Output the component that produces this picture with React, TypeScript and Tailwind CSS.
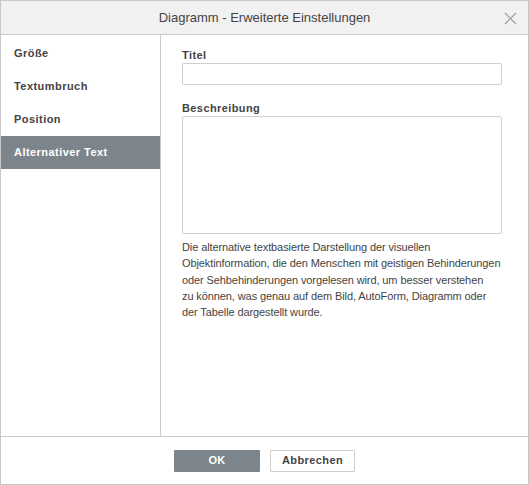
const NAV = ["Größe", "Textumbruch", "Position", "Alternativer Text"];

const DESC = [
  "Die alternative textbasierte Darstellung der visuellen",
  "Objektinformation, die den Menschen mit geistigen Behinderungen",
  "oder Sehbehinderungen vorgelesen wird, um besser verstehen",
  "zu können, was genau auf dem Bild, AutoForm, Diagramm oder",
  "der Tabelle dargestellt wurde.",
];

export default function App() {
  const active = "Alternativer Text";
  return (
    <div className="flex h-[485px] w-[529px] flex-col border border-[#c8c8c8] bg-white font-['Liberation_Sans',Arial,sans-serif] text-[11px] text-[#444]">
      <div className="flex h-[34px] shrink-0 items-center justify-center border-b border-[#cbcbcb] bg-[#f1f1f1]">
        <span className="text-[13px] text-[#444]">Diagramm - Erweiterte Einstellungen</span>
        <svg
          className="absolute left-[504px] top-[12px]"
          width="13"
          height="13"
          viewBox="0 0 13 13"
          stroke="#9a9a9a"
          strokeWidth="1.2"
        >
          <path d="M1 1l11 11M12 1L1 12" />
        </svg>
      </div>

      <div className="flex min-h-0 flex-1">
        {/* left tabs */}
        <div className="w-[160px] shrink-0 border-r border-[#cbcbcb] pt-[2px]">
          {NAV.map((n) => (
            <div
              key={n}
              className={`flex h-[33px] items-center pl-[13px] font-bold tracking-[0.45px] ${
                n === active ? "bg-[#7d858c] text-white" : "text-[#444]"
              }`}
            >
              {n}
            </div>
          ))}
        </div>

        {/* content */}
        <div className="flex-1 pl-[21px] pt-[13px]">
          <div className="w-[320px]">
            <div className="mb-[1px] font-bold leading-[14px] tracking-[0.4px]">Titel</div>
            <input className="block h-[22px] w-full rounded-[2px] border border-[#cfcfcf] px-1 outline-none" />
            <div className="mb-[1px] mt-[16px] font-bold leading-[14px] tracking-[0.4px]">Beschreibung</div>
            <textarea className="block h-[118px] w-full resize-none rounded-[2px] border border-[#cfcfcf] px-1 outline-none" />
            <div className="mt-[5px] leading-[16.3px] tracking-[-0.1px] text-[#444]">
              {DESC.map((l) => (
                <div key={l} className="whitespace-nowrap">
                  {l}
                </div>
              ))}
            </div>
          </div>
        </div>
      </div>

      <div className="flex h-[48px] shrink-0 items-center justify-center gap-[10px] border-t border-[#cbcbcb]">
        <button className="h-[22px] w-[86px] rounded-[1px] bg-[#7d858c] font-bold tracking-[0.3px] text-white">
          OK
        </button>
        <button className="h-[22px] w-[85px] rounded-[1px] border border-[#cfcfcf] bg-white font-bold tracking-[0.4px] text-[#444]">
          Abbrechen
        </button>
      </div>
    </div>
  );
}
